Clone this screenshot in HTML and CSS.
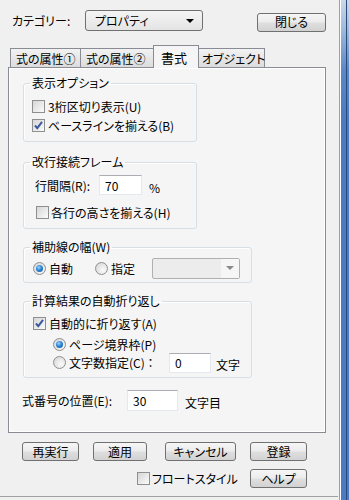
FILE: index.html
```html
<html>
<head>
<meta charset="utf-8">
<title>書式</title>
<link rel="stylesheet" href="styles.css">
</head>
<body>
<div class="window">
  <div class="dialog">

    <div class="top-row">
      <span class="cat-label">カテゴリー:</span>
      <div class="combo"><span class="combo-text">プロパティ</span><span class="arrow"></span></div>
      <div class="btn close">閉じる</div>
    </div>

    <div class="tabs">
      <div class="tab t1">式の属性①</div>
      <div class="tab t2">式の属性②</div>
      <div class="tab active">書式</div>
      <div class="tab t4">オブジェクト</div>
    </div>

    <div class="panel">
      <fieldset class="group narrow g1">
        <legend>表示オプション</legend>
        <div class="row"><span class="cb"></span>3桁区切り表示(U)</div>
        <div class="row"><span class="cb on"><svg width="11" height="11" viewBox="0 0 11 11"><path d="M2 5.5 L4.3 8.2 L9 1.8" fill="none" stroke="#3d5a9c" stroke-width="2"/></svg></span>ベースラインを揃える(B)</div>
      </fieldset>

      <fieldset class="group narrow g2">
        <legend>改行接続フレーム</legend>
        <div class="row spacing">
          <span class="lbl-r">行間隔(R):</span>
          <div class="field f-spacing">70</div>
          <span class="pct">%</span>
        </div>
        <div class="row same-h"><span class="cb"></span>各行の高さを揃える(H)</div>
      </fieldset>

      <fieldset class="group wide g3">
        <legend>補助線の幅(W)</legend>
        <div class="row aux">
          <span class="rb on"></span><span class="rb-text">自動</span>
          <span class="rb rb-spec"></span><span class="rb-text">指定</span>
          <div class="dd"><span class="dd-btn"><span class="arrow gray"></span></span></div>
        </div>
      </fieldset>

      <fieldset class="group wide g4">
        <legend>計算結果の自動折り返し</legend>
        <div class="row wrap-cb"><span class="cb on"><svg width="11" height="11" viewBox="0 0 11 11"><path d="M2 5.5 L4.3 8.2 L9 1.8" fill="none" stroke="#3d5a9c" stroke-width="2"/></svg></span>自動的に折り返す(A)</div>
        <div class="row sub r-page"><span class="rb on"></span>ページ境界枠(P)</div>
        <div class="row sub r-count">
          <span class="rb"></span><span class="count-lbl">文字数指定(C) ：</span>
          <div class="field f-count">0</div>
          <span class="unit">文字</span>
        </div>
      </fieldset>

      <div class="row eqno">
        <span class="eq-lbl">式番号の位置(E):</span>
        <div class="field f-eq">30</div>
        <span class="unit">文字目</span>
      </div>
    </div>

    <div class="btn-row">
      <div class="btn b-rerun">再実行</div>
      <div class="btn b-apply">適用</div>
      <div class="btn b-cancel">キャンセル</div>
      <div class="btn b-reg">登録</div>
    </div>
    <div class="btn-row second">
      <span class="cb"></span><span class="float-lbl">フロートスタイル</span>
      <div class="btn b-help">ヘルプ</div>
    </div>
    <div class="bottom-line"></div>
  </div>
  <div class="frame"></div>
</div>
</body>
</html>
```

FILE: styles.css
```css
body        {margin:0; background:#f0f0f0; color:#000;
             font-family:"Noto Sans CJK JP","Liberation Sans",sans-serif; font-size:12px;
             font-feature-settings:"palt"; white-space:nowrap;}
.window     {display:flex; width:349px; height:500px; overflow:hidden;}
.dialog     {width:341px; box-sizing:border-box; border-right:1px solid #fff;
             box-shadow:inset -1px 0 0 #a0a0a0; display:flex; flex-direction:column;}
.frame      {width:8px;
             background:linear-gradient(to right, transparent 5px, #2c4a78 5px, #2c4a78 6px, transparent 6px),
                        linear-gradient(to bottom, #cbd9ea 0, #9db9dc 30px, #5a88c8 70px, #4a7bc4 120px, #4a7bc4);}

/* top row */
.top-row    {display:flex; align-items:center; height:21px; margin-top:10px; padding-left:12px;}
.cat-label  {width:73px;}
.combo      {width:118px; height:21px; box-sizing:border-box; border:1px solid #707070; border-radius:3px;
             background:linear-gradient(#f4f4f4, #e4e4e4); display:flex; align-items:center;
             padding-left:9px; padding-right:8px;}
.combo-text {flex:1;}
.arrow      {width:0; height:0; border-left:4px solid transparent; border-right:4px solid transparent;
             border-top:4px solid #000;}
.arrow.gray {border-top-color:#8a8a8a;}

.btn        {height:19px; box-sizing:border-box; border:1px solid #707070; border-radius:3px;
             background:linear-gradient(#f6f6f6 0, #ececec 45%, #dedede 55%, #d2d2d2);
             display:flex; align-items:center; justify-content:center; line-height:1; flex:none;}
.close      {width:69px; margin-left:auto; margin-right:14px; margin-top:3px;}

/* tabs */
.tabs       {display:flex; align-items:flex-end; height:22px; margin-top:14px; padding-left:10px;
             position:relative; z-index:1;}
.tab        {height:19px; box-sizing:border-box; border:1px solid #898c95; border-bottom:none;
             background:linear-gradient(#f2f2f2, #dcdcdc); display:flex; align-items:center;
             padding-left:5px; flex:none;}
.t1         {width:71px;}
.t2         {width:74px; border-left:none;}
.t4         {width:68px; border-left:none;}
.tab.active {height:23px; margin:0 -2px -1px -2px; width:46px; background:#f5f5f5; position:relative;
             z-index:2; font-size:13px; padding-left:7px; align-items:flex-start; padding-top:2px;}

.panel      {margin-left:8px; width:318px; height:366px; box-sizing:border-box; border:1px solid #898c95;
             box-shadow:inset 1px 1px 0 #fff, inset -1px -1px 0 #fff; background:#f5f5f5;
             padding:7px 0 0 14px;}

/* group boxes */
.group      {margin:0; padding:0 8px 6px 8px; border:1px solid #d5dfe5; border-radius:3px;
             box-shadow:inset 1px 1px 0 #fff; min-width:0; box-sizing:border-box;}
.group legend {padding:0 2px; margin-left:-2px; line-height:16px;}
.narrow     {width:174px;}
.wide       {width:229px;}
.g1 .row:first-of-type {margin-top:6px;}
.g2         {margin-top:12px; padding-bottom:6px;}
.g3         {margin-top:10px; padding-bottom:4px;}
.g4         {margin-top:10px; padding-bottom:5px;}

.row        {display:flex; align-items:center; height:19px; gap:3px;}
.row > *    {flex:none;}
.cb         {width:13px; height:13px; box-sizing:border-box; border:1px solid #8e8f8f;
             background:linear-gradient(135deg, #d6d6d6, #fbfbfb); display:inline-flex;
             align-items:center; justify-content:center; flex:none;}
.rb         {width:13px; height:13px; box-sizing:border-box; border:1px solid #8e8f8f; border-radius:50%;
             background:radial-gradient(circle at 65% 65%, #fbfbfb, #d2d2d2); flex:none; position:relative;}
.rb.on::after {content:""; position:absolute; left:2px; top:2px; width:7px; height:7px; border-radius:50%;
             background:radial-gradient(circle at 40% 35%, #9fd5ff 0, #2a86d6 45%, #0f4d99 100%);}

.spacing    {height:20px; margin-top:5px; padding-left:3px; gap:0;}
.lbl-r      {width:64px;}
.field      {height:20px; box-sizing:border-box; border:1px solid #e3e9ef; border-top-color:#abadb3;
             background:#fff; display:flex; align-items:center; padding-left:5px;}
.f-spacing  {width:43px;}
.pct        {margin-left:7px; margin-top:4px;}
.same-h     {margin-top:8px; padding-left:4px; gap:2px;}

.aux        {height:20px; margin-top:3px; padding-left:1px; gap:0;}
.rb-text    {margin-left:3px; width:46px;}
.rb-spec    {margin-left:0;}
.aux .rb-text:last-of-type {width:41px;}
.dd         {width:88px; height:21px; box-sizing:border-box; border:1px solid #b0b0b0; border-radius:2px;
             background:#ececec; display:flex; justify-content:flex-end;}
.dd-btn     {width:18px; background:#f6f6f6; display:flex; align-items:center; justify-content:center;}

.wrap-cb    {height:18px; margin-top:5px; padding-left:1px;}
.sub        {padding-left:21px; gap:3px;}
.r-page     {height:18px; margin-top:3px;}
.r-count    {height:19px;}
.count-lbl  {width:97px;}
.f-count    {width:42px; height:20px;}
.unit       {margin-left:2px; margin-top:4px;}

.eqno       {height:21px; margin-top:12px; margin-left:-1px; gap:0;}
.eq-lbl     {width:105px;}
.f-eq       {width:51px; height:21px;}
.eqno .unit {margin-left:7px;}

/* bottom buttons */
.btn-row    {display:flex; align-items:center; height:19px; margin-top:9px; padding-left:22px;}
.b-rerun    {width:57px;}
.b-apply    {width:54px; margin-left:14px;}
.b-cancel   {width:71px; margin-left:18px;}
.b-reg      {width:57px; margin-left:14px;}
.second     {margin-top:8px; padding-left:137px;}
.float-lbl  {margin-left:2px; width:98px;}
.b-help     {width:57px;}
.bottom-line {margin-top:8px; height:1px; background:#a0a0a0; margin-right:2px;}
```
